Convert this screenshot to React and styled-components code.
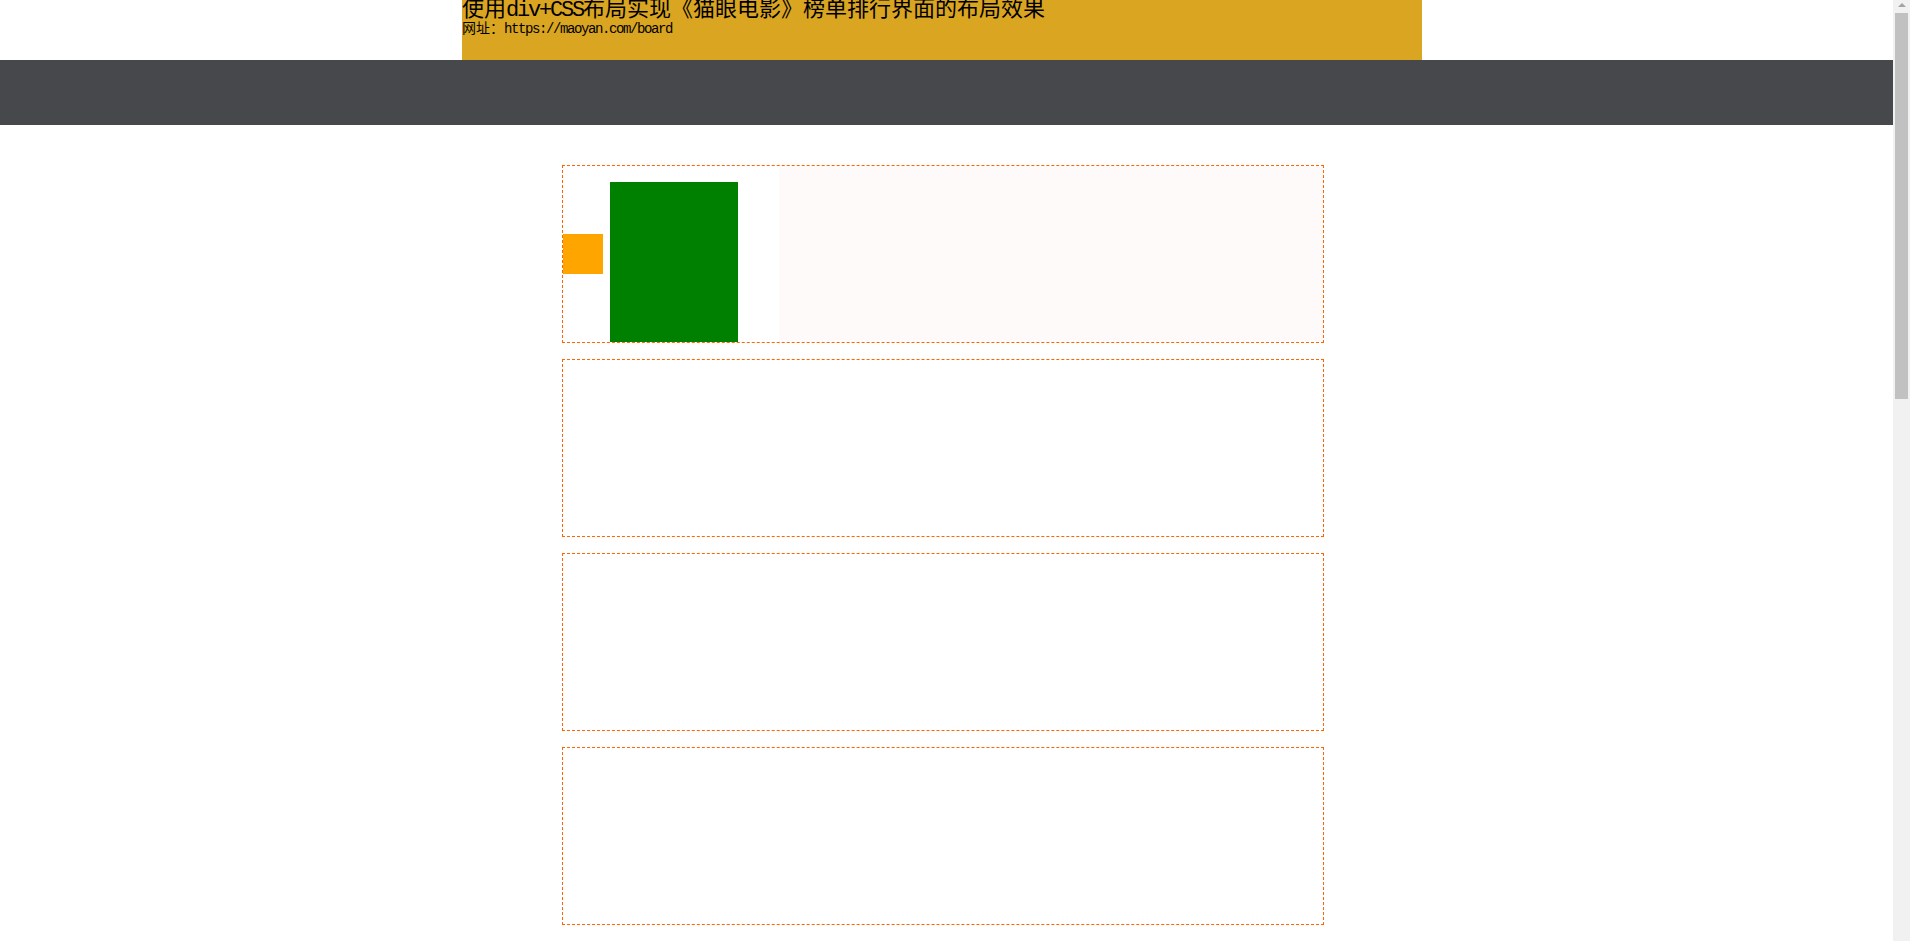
import styled, { createGlobalStyle } from 'styled-components';

const GlobalStyle = createGlobalStyle`
  html, body {
    margin: 0;
    padding: 0;
    background: #fff;
  }
  body {
    font-family: "Liberation Mono", "Noto Sans CJK SC", monospace;
    color: #000;
  }
`;

// leave room for the browser scrollbar seen in the screenshot
const Page = styled.div`
  width: calc(100% - 17px);
  padding-bottom: 120px;
`;

// the original page sits 4-5px left of true centre
const Banner = styled.header`
  width: 960px;
  height: 60px;
  margin-left: calc(50% - 484.5px);
  background-color: #daa520;
  overflow: hidden;
`;

const Title = styled.h1`
  margin: 0;
  font-size: 22px;
  font-weight: normal;
  line-height: 22px;
`;

const Link = styled.p`
  margin: 0;
  font-size: 14px;
  line-height: 14px;
`;

// latin runs are half-width in the original song-style font
const Latin = styled.span`
  letter-spacing: -0.1em;
`;

const Nav = styled.nav`
  height: 65px;
  background-color: #47484c;
`;

const Board = styled.main`
  width: 762px;
  margin: 40px 0 0 calc(50% - 384.5px);
  display: flex;
  flex-direction: column;
  gap: 16px;
`;

const Item = styled.div`
  box-sizing: border-box;
  height: 178px;
  border: 1px dashed #ff6600;
  display: flex;
`;

const Side = styled.div`
  width: 216px;
  display: flex;
  align-items: center;
  background-color: #fff;
`;

const Rank = styled.div`
  width: 40px;
  height: 40px;
  background-color: #ffa500;
`;

const Poster = styled.div`
  width: 128px;
  height: 160px;
  margin-left: 7px;
  align-self: flex-end;
  background-color: #008000;
`;

const Detail = styled.div`
  flex: 1;
  background-color: #fffafa;
`;

const ScrollTrack = styled.div`
  position: fixed;
  top: 0;
  right: 0;
  width: 17px;
  height: 100vh;
  background-color: #f1f1f1;
  display: flex;
  flex-direction: column;
  align-items: center;
`;

const ScrollArrow = styled.div`
  margin-top: 3px;
  width: 0;
  height: 0;
  border-left: 4px solid transparent;
  border-right: 4px solid transparent;
  border-bottom: 4px solid #a3a3a3;
`;

const ScrollThumb = styled.div`
  margin-top: 6px;
  width: 13px;
  height: 386px;
  background-color: #c1c1c1;
`;

const rows = Array.from({ length: 10 }, (_, i) => i);

const App = () => {
  return (
    <>
      <GlobalStyle />
      <Page>
        <Banner>
          <Title>
            使用<Latin>div+CSS</Latin>布局实现《猫眼电影》榜单排行界面的布局效果
          </Title>
          <Link>
            网址：<Latin>https://maoyan.com/board</Latin>
          </Link>
        </Banner>
        <Nav />
        <Board>
          {rows.map((i) =>
            i === 0 ? (
              <Item key={i}>
                <Side>
                  <Rank />
                  <Poster />
                </Side>
                <Detail />
              </Item>
            ) : (
              <Item key={i} />
            )
          )}
        </Board>
      </Page>
      <ScrollTrack>
        <ScrollArrow />
        <ScrollThumb />
      </ScrollTrack>
    </>
  );
};

export default App;
